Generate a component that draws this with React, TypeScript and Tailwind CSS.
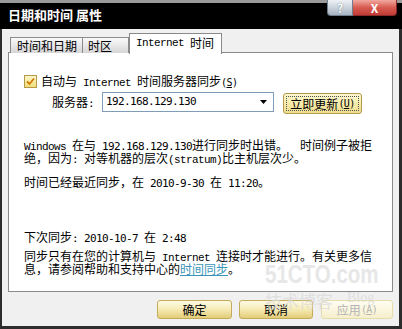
import type { ReactNode } from "react";

// Latin runs in the dialog are drawn with a 6px-wide fixed font, as in SimSun.
function M({ children }: { children: ReactNode }) {
  return (
    <span className="whitespace-pre font-['Liberation_Mono',monospace] text-[11px] tracking-[-0.6px]">
      {children}
    </span>
  );
}

function N({ children }: { children: ReactNode }) {
  return (
    <span className="whitespace-pre font-['DejaVu_Sans_Mono',monospace] text-[11px] tracking-[-0.62px]">
      {children}
    </span>
  );
}

function Key({ k }: { k: string }) {
  return (
    <span className="font-['DejaVu_Sans_Mono',monospace] text-[10px] tracking-[-0.6px]">
      (<span className="underline">{k}</span>)
    </span>
  );
}

function Line({ children, className = "" }: { children: ReactNode; className?: string }) {
  return <div className={`h-[13px] leading-[13px] whitespace-nowrap ${className}`}>{children}</div>;
}

function DialogButton({
  label,
  width,
  disabled,
}: {
  label: ReactNode;
  width: string;
  disabled?: boolean;
}) {
  return (
    <div
      className={`${width} flex h-[19px] items-center justify-center rounded-[3px] border text-[12px] ${
        disabled
          ? "border-[#e6dcaa] bg-gradient-to-b from-[#fffdf2] to-[#f6efcc] text-[#b4b4b4]"
          : "border-[#c4ab5a] bg-gradient-to-b from-[#fffbe4] via-[#f6eab4] to-[#e2cc78] text-black"
      }`}
    >
      {label}
    </div>
  );
}

export default function App() {
  return (
    <div className="relative flex h-[329px] w-[402px] flex-col overflow-hidden bg-[#f0f0f0] font-['Noto_Sans_CJK_SC','Liberation_Sans',sans-serif] text-[12px] text-black">
      {/* title bar */}
      <div className="flex h-[29px] shrink-0 items-start justify-between border-t-[3px] border-[#9a9a9a] bg-black">
        <div className="pl-[8px] pt-[3px] text-[13px] font-bold leading-[18px] text-white">
          日期和时间 属性
        </div>
        <div className="-mt-[3px] mr-[5px] flex">
          <div className="flex h-[16px] w-[26px] items-center justify-center rounded-bl-[4px] border border-t-0 border-[#6f7e8e] bg-gradient-to-b from-[#eef2f6] to-[#a7b4c2] text-[12px] font-bold leading-none text-white [text-shadow:0_0_1px_#4a5868]">
            ?
          </div>
          <div className="flex h-[16px] w-[44px] items-center justify-center rounded-br-[4px] border border-l-0 border-t-0 border-[#8a2a2a] bg-gradient-to-b from-[#f0a8a0] via-[#d85a50] to-[#c03c34] text-[12px] font-bold leading-none text-white">
            X
          </div>
        </div>
      </div>

      {/* body */}
      <div className="flex flex-1 flex-col border-x-2 border-b-[3px] border-l-[#2c2c2c] border-r-[#2c2c2c] border-b-[#2c2c2c] border-r-[3px]">
        {/* tabs */}
        <div className="relative z-10 ml-[8px] mt-[4px] flex h-[20px] items-start">
          <div className="mt-[4px] flex h-[16px] w-[72px] items-center border-l border-t border-[#8a8a8a] bg-gradient-to-b from-[#fafafa] to-[#d6d6d6] pl-[6px] leading-none">
            时间和日期
          </div>
          <div className="mt-[4px] flex h-[16px] w-[47px] items-center border-x border-t border-[#8a8a8a] bg-gradient-to-b from-[#fafafa] to-[#d6d6d6] pl-[5px] leading-none">
            时区
          </div>
          <div className="flex h-[21px] w-[93px] items-center border-x border-t border-[#8a8a8a] bg-white pl-[6px] pb-[2px] leading-none">
            <M>Internet </M>时间
          </div>
        </div>

        {/* panel */}
        <div className="-mt-px ml-[6px] flex h-[240px] w-[385px] flex-col border border-[#8a8a8a] bg-white pl-[15px]">
          <div className="mt-[22px] flex h-[13px] items-center">
            <div className="flex h-[13px] w-[13px] items-center justify-center border border-[#b49a48] bg-gradient-to-b from-[#fdf8c8] to-[#f0dc78]">
              <svg width="9" height="9" viewBox="0 0 9 9">
                <path d="M1 4.5 L3.5 7 L8 1.5" fill="none" stroke="#d07a00" strokeWidth="1.8" />
              </svg>
            </div>
            <div className="ml-[4px] whitespace-nowrap leading-[13px]">
              自动与<M> Internet </M>时间服务器同步<Key k="S" />
            </div>
          </div>

          <div className="mt-[4px] flex h-[22px] items-start">
            <div className="ml-[28px] mt-[3px] w-[50px] whitespace-nowrap leading-[13px]">
              服务器<N>:</N>
            </div>
            <div className="flex h-[20px] w-[172px] items-center justify-between border border-[#7f9db9] bg-white pl-[3px] pr-[6px]">
              <N>192.168.129.130</N>
              <svg width="7" height="4" viewBox="0 0 7 4">
                <path d="M0 0 H7 L3.5 4 Z" fill="#000" />
              </svg>
            </div>
            <div className="ml-[9px] mt-[1px] flex h-[21px] w-[79px] items-center justify-center rounded-[3px] border border-[#b39a4e] bg-gradient-to-b from-[#fdf7cf] via-[#f7ebaa] to-[#eedd8c] p-[2px]">
              <div className="flex h-full w-full items-center justify-center border border-dotted border-[#505050] leading-none">
                立即更新<Key k="U" />
              </div>
            </div>
          </div>

          <div className="mt-[24px]">
            <Line>
              <M>Windows </M>在与<N> 192.168.129.130</N>进行同步时出错。<M>  </M>时间例子被拒
            </Line>
            <Line>
              绝，因为<N>: </N>对等机器的层次<M>(stratum)</M>比主机层次少。
            </Line>
          </div>

          <Line className="mt-[11px]">
            时间已经最近同步，在<N> 2010-9-30 </N>在<N> 11:20</N>。
          </Line>

          <Line className="mt-[42px]">
            下次同步<N>: 2010-10-7 </N>在<N> 2:48</N>
          </Line>

          <div className="mt-[6px]">
            <Line>
              同步只有在您的计算机与<M> Internet </M>连接时才能进行。有关更多信
            </Line>
            <Line>
              息，请参阅帮助和支持中心的
              <span className="text-[#3a94b8] underline">时间同步</span>。
            </Line>
          </div>
        </div>

        {/* buttons */}
        <div className="mt-[8px] flex">
          <div className="ml-[155px]">
            <DialogButton label="确定" width="w-[75px]" />
          </div>
          <div className="ml-[7px]">
            <DialogButton label="取消" width="w-[74px]" />
          </div>
          <div className="ml-[8px]">
            <DialogButton
              disabled
              width="w-[72px]"
              label={
                <>
                  应用<Key k="A" />
                </>
              }
            />
          </div>
        </div>
      </div>

      {/* 51CTO watermark over the dialog */}
      <div className="pointer-events-none absolute left-[265px] top-[262px] origin-left scale-x-[0.82] font-['Liberation_Sans',sans-serif] text-[25px] font-bold leading-none text-[#e2e2e2] opacity-80">
        51CTO.com
      </div>
      <div className="pointer-events-none absolute left-[265px] top-[292px] text-[17px] leading-none text-[#d8d8d8] opacity-70">
        技术博客
      </div>
      <div className="pointer-events-none absolute left-[347px] top-[291px] font-['Liberation_Serif',serif] text-[14px] leading-none text-[#d8d8d8] opacity-70">
        Blog
      </div>
    </div>
  );
}
